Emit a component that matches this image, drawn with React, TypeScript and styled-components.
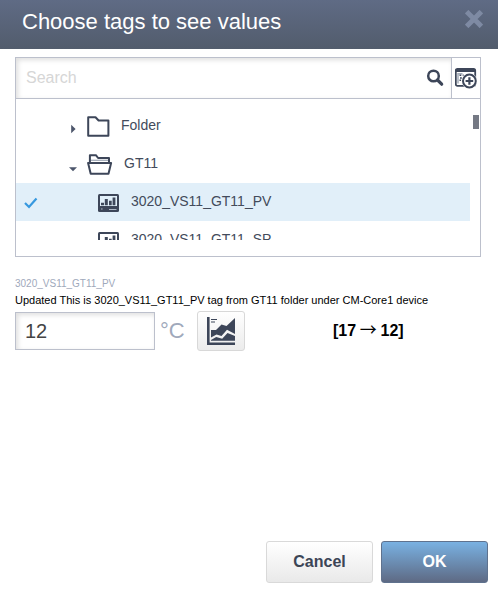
import React from "react";
import styled, { createGlobalStyle } from "styled-components";

const GlobalStyle = createGlobalStyle`
  * { box-sizing: border-box; }
  html, body { margin: 0; background: #fff; }
  body, input, button { font-family: "Liberation Sans", Arial, sans-serif; }
`;

const Dialog = styled.section`
  width: 498px;
  height: 603px;
  display: flex;
  flex-direction: column;
  background: #fff;
  overflow: hidden;
`;

const Header = styled.header`
  height: 49px;
  flex: none;
  display: flex;
  justify-content: space-between;
  align-items: flex-start;
  padding: 8px 15px 0 22px;
  background: linear-gradient(#5f6b85, #525c6c);
`;

const Title = styled.h1`
  margin: 1px 0 0;
  font-size: 22px;
  line-height: 26px;
  font-weight: 400;
  color: #fff;
`;

const CloseButton = styled.button`
  border: 0;
  padding: 0;
  margin-top: 2px;
  background: none;
  display: flex;
`;

const Body = styled.main`
  flex: 1;
  padding: 8px 17px 0 15px;
`;

const Picker = styled.div`
  height: 200px;
  border: 1px solid #bcc0cc;
`;

const SearchBar = styled.div`
  display: flex;
  height: 41px;
  border-bottom: 1px solid #bcc0cc;
`;

const SearchField = styled.label`
  flex: 1;
  display: flex;
  align-items: center;
  padding: 0 7px 0 10px;
  box-shadow: inset 2px 2px 5px rgba(0, 0, 0, 0.13);
`;

const SearchInput = styled.input`
  flex: 1;
  min-width: 0;
  border: 0;
  padding: 0;
  outline: 0;
  background: none;
  font-size: 16px;
  line-height: 20px;
  &::placeholder { color: #d6d6d6; opacity: 1; }
`;

const AddButton = styled.button`
  width: 29px;
  border: 0;
  border-left: 1px solid #bcc0cc;
  padding: 0;
  background: #fff;
  display: flex;
  align-items: center;
  justify-content: center;
`;

const TreeArea = styled.div`
  display: flex;
  height: 141px;
  padding-top: 8px;
`;

const Tree = styled.div`
  width: 454px;
  height: 133px;
  overflow: hidden;
`;

const Row = styled.div<{ $selected?: boolean }>`
  height: 38px;
  display: grid;
  grid-template-columns: 51px auto 1fr;
  background: ${(p) => (p.$selected ? "#e1eff9" : "transparent")};
`;

const CheckCell = styled.span`
  padding: 12px 0 0 8px;
`;

const NodeIcon = styled.span<{ $leaf?: boolean }>`
  display: flex;
  gap: 10px;
  padding-left: ${(p) => (p.$leaf ? 31 : 2)}px;
`;

const NodeLabel = styled.span<{ $gap: number }>`
  padding: 10px 0 0 ${(p) => p.$gap}px;
  font-size: 14px;
  line-height: 17px;
  color: #434b5b;
  white-space: nowrap;
`;

const ScrollThumb = styled.div`
  width: 6px;
  height: 14px;
  margin: 8px 0 0 3px;
  background: #757984;
`;

const TagName = styled.div`
  margin-top: 19px;
  font-size: 10px;
  line-height: 15px;
  color: #a0a9bb;
`;

const Description = styled.div`
  margin-top: 2px;
  font-size: 11px;
  line-height: 14px;
  color: #000;
  white-space: nowrap;
`;

const ValueRow = styled.div`
  display: flex;
  align-items: center;
  margin-top: 4px;
  height: 40px;
`;

const ValueInput = styled.input`
  width: 140px;
  height: 38px;
  padding: 0 9px;
  border: 1px solid #bcc0cc;
  border-radius: 0;
  outline: 0;
  box-shadow: inset 2px 2px 5px rgba(0, 0, 0, 0.13);
  font-size: 20px;
  color: #444;
`;

const Unit = styled.span`
  width: 42px;
  padding-left: 5px;
  font-size: 22px;
  color: #a0a9bb;
`;

const ChartButton = styled.button`
  width: 48px;
  height: 40px;
  padding: 0;
  display: flex;
  align-items: center;
  justify-content: center;
  border: 1px solid #d8d8d8;
  border-radius: 3px;
  background: linear-gradient(#fff, #ececec);
`;

const Change = styled.strong`
  margin-left: 88px;
  font-size: 16px;
  line-height: 20px;
  color: #000;
  white-space: nowrap;
`;

const Arrow = styled.span`
  display: inline-flex;
  justify-content: center;
  width: 15.5px;
  font-family: "Noto Sans CJK JP", sans-serif;
  font-size: 17px;
  font-weight: 400;
  line-height: 16px;
`;

const Footer = styled.footer`
  flex: none;
  display: flex;
  justify-content: flex-end;
  gap: 8px;
  padding: 0 10px 20px 0;
`;

const ActionButton = styled.button<{ $primary?: boolean }>`
  width: 107px;
  height: 42px;
  padding: 0 0 1px;
  border: 1px solid ${(p) => (p.$primary ? "#5f728e" : "#d9d9d9")};
  border-radius: 3px;
  background: ${(p) =>
    p.$primary ? "linear-gradient(#79b1e2, #5e6a84)" : "linear-gradient(#fff, #e9e9e9)"};
  color: ${(p) => (p.$primary ? "#fff" : "#3c4556")};
  font-size: 16px;
  font-weight: 700;
`;

const ink = "#3d4659";

const CloseIcon = () => (
  <svg width="18" height="18" viewBox="0 0 18 18">
    <path d="M3.4 3.4l11.2 11.2M14.6 3.4l-11.2 11.2" stroke="#7e8aa3" strokeWidth="5" strokeLinecap="square" />
  </svg>
);

const SearchIcon = () => (
  <svg width="18" height="18" viewBox="0 0 18 18" fill="none" stroke={ink}>
    <circle cx="7.5" cy="7" r="5.3" strokeWidth="2.5" />
    <path d="M11.5 11l4.2 4.2" strokeWidth="3.2" strokeLinecap="round" />
  </svg>
);

const AddTagIcon = () => (
  <svg width="22" height="22" viewBox="0 0 22 22">
    <rect x="0.8" y="1.8" width="19.4" height="17" rx="1.6" fill="#fff" stroke={ink} strokeWidth="1.8" />
    <path d="M1 2h19v3H1z" fill={ink} />
    <path d="M3 16.5V6.8h4.5" fill="none" stroke="#a4acb9" strokeWidth="1.5" />
    <path d="M4.5 8.3h1.8M7.7 8.3h1M5 11h1.8M4.5 13.3h1.6" stroke={ink} strokeWidth="1.6" />
    <circle cx="14.4" cy="14" r="7.7" fill="#fff" />
    <circle cx="14.4" cy="14" r="6.4" fill="#fff" stroke={ink} strokeWidth="2" />
    <path d="M14.4 10.2v7.6M10.6 14h7.6" stroke={ink} strokeWidth="2.2" />
  </svg>
);

const Caret = ({ open = false }: { open?: boolean }) => (
  <svg width="8" height="38" viewBox="0 0 8 38">
    <path d={open ? "M0 22.3h8l-4 4z" : "M2.2 17.8l4.4 4.2-4.4 4.2z"} fill="#4c566b" />
  </svg>
);

const FolderIcon = () => (
  <svg width="24" height="38" viewBox="0 0 24 38" fill="none" stroke={ink} strokeWidth="2" strokeLinejoin="round">
    <path d="M1.2 10.2h7.3l3.1 3.3h9.8v15.3H1.2z" />
  </svg>
);

const OpenFolderIcon = () => (
  <svg width="26" height="38" viewBox="0 0 26 38" fill="none" stroke={ink} strokeWidth="2" strokeLinejoin="round">
    <path d="M2.9 17v-6.8h6l2.2 2.8H22V17" />
    <path d="M4 15.3h17" stroke="#a4acb9" strokeWidth="1.3" />
    <path d="M1.1 18h23l-2.6 10.8H3.7z" />
  </svg>
);

const TagIcon = ({ screen = "#e1eff9" }: { screen?: string }) => (
  <svg width="21" height="38" viewBox="0 0 21 38">
    <rect y="11" width="21" height="18" rx="1.5" fill={ink} />
    <path d="M2 13h17v10H2z" fill={screen} />
    <path d="M3 19.7h3v2.6H3zM6.8 16h3v6.3h-3zM11 17.7h2.7v4.6H11zM14.6 14.5h2.8v7.8h-2.8z" fill={ink} />
    <path d="M3 26h1.6M11 26.5h7.5" stroke="#aeb7c5" strokeWidth="1.2" />
  </svg>
);

const CheckIcon = () => (
  <svg width="14" height="12" viewBox="0 0 14 12">
    <path d="M1 6l4 4 7.5-8.5" fill="none" stroke="#3698df" strokeWidth="2.2" />
  </svg>
);

const ChartIcon = () => (
  <svg width="28" height="28" viewBox="0 0 28 28">
    <path d="M0 0h2.6v25.4H28V28H0z" fill={ink} />
    <path d="M4 2.5h6M4 5h4" stroke={ink} strokeWidth="1.2" />
    <path d="M4 13h5l5.5-5.5 5 1.5L28 1v16l-8-4.2-5.5 6.2-5-1.5L4 20.5z" fill={ink} />
    <path d="M4 23.8v-.8l5.2-3 6 1.7L20.5 16l7.5 3v4.8z" fill={ink} />
  </svg>
);

export default function App() {
  return (
    <>
      <GlobalStyle />
      <Dialog>
        <Header>
          <Title>Choose tags to see values</Title>
          <CloseButton aria-label="Close"><CloseIcon /></CloseButton>
        </Header>
        <Body>
          <Picker>
            <SearchBar>
              <SearchField>
                <SearchInput placeholder="Search" />
                <SearchIcon />
              </SearchField>
              <AddButton aria-label="Add tag"><AddTagIcon /></AddButton>
            </SearchBar>
            <TreeArea>
              <Tree>
                <Row>
                  <CheckCell />
                  <NodeIcon><Caret /><FolderIcon /></NodeIcon>
                  <NodeLabel $gap={10}>Folder</NodeLabel>
                </Row>
                <Row>
                  <CheckCell />
                  <NodeIcon><Caret open /><OpenFolderIcon /></NodeIcon>
                  <NodeLabel $gap={11}>GT11</NodeLabel>
                </Row>
                <Row $selected>
                  <CheckCell><CheckIcon /></CheckCell>
                  <NodeIcon $leaf><TagIcon /></NodeIcon>
                  <NodeLabel $gap={12}>3020_VS11_GT11_PV</NodeLabel>
                </Row>
                <Row>
                  <CheckCell />
                  <NodeIcon $leaf><TagIcon screen="#fff" /></NodeIcon>
                  <NodeLabel $gap={12}>3020_VS11_GT11_SP</NodeLabel>
                </Row>
              </Tree>
              <ScrollThumb />
            </TreeArea>
          </Picker>
          <TagName>3020_VS11_GT11_PV</TagName>
          <Description>Updated This is 3020_VS11_GT11_PV tag from GT11 folder under CM-Core1 device</Description>
          <ValueRow>
            <ValueInput defaultValue="12" />
            <Unit>°C</Unit>
            <ChartButton aria-label="Chart"><ChartIcon /></ChartButton>
            <Change>[17 <Arrow>→</Arrow> 12]</Change>
          </ValueRow>
        </Body>
        <Footer>
          <ActionButton>Cancel</ActionButton>
          <ActionButton $primary>OK</ActionButton>
        </Footer>
      </Dialog>
    </>
  );
}
